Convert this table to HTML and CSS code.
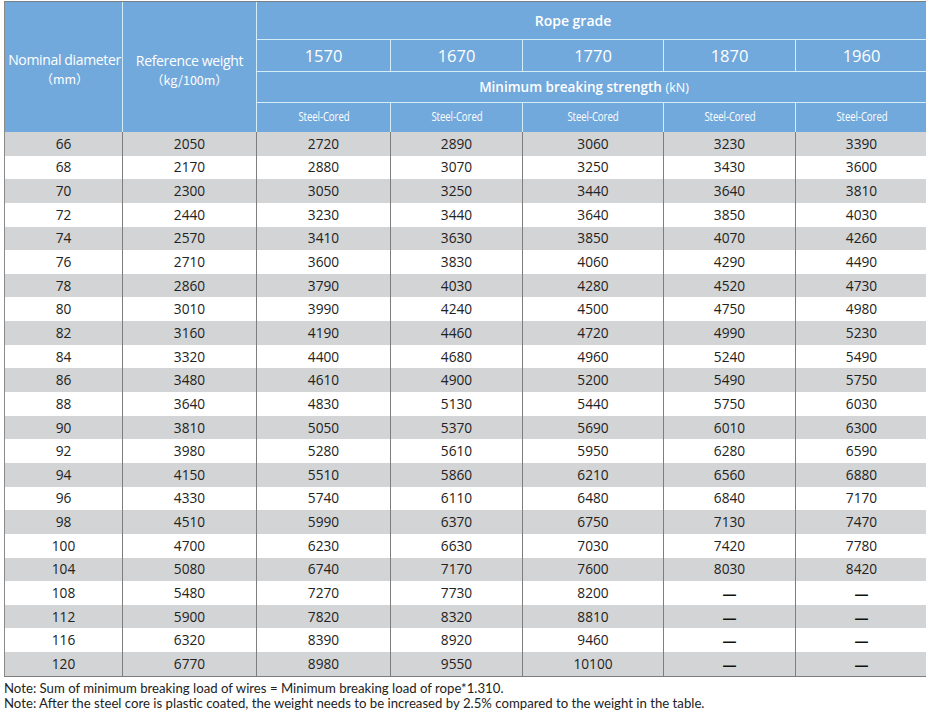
FILE: index.html
```html
<!DOCTYPE html>
<html lang="en">
<head>
<meta charset="utf-8">
<title>Rope grade table</title>
<link rel="stylesheet" href="styles.css">
</head>
<body>
<div class="page">
<table class="spec">
  <colgroup>
    <col class="c-dia"><col class="c-wt"><col class="c-g1"><col class="c-g2"><col class="c-g3"><col class="c-g4"><col class="c-g5">
  </colgroup>
  <thead>
    <tr class="h1">
      <th rowspan="4" class="side side-a">Nominal diameter<br><span class="unit">（mm）</span></th>
      <th rowspan="4" class="side side-b">Reference weight<br><span class="unit">（kg/100m）</span></th>
      <th colspan="5" class="title">Rope grade</th>
    </tr>
    <tr class="h2">
      <th class="grade">1570</th><th class="grade">1670</th><th class="grade">1770</th><th class="grade">1870</th><th class="grade last">1960</th>
    </tr>
    <tr class="h3">
      <th colspan="5" class="title sub">Minimum breaking strength <span class="kn">(kN)</span></th>
    </tr>
    <tr class="h4">
      <th class="core"><span class="narrow">Steel-Cored</span></th><th class="core"><span class="narrow">Steel-Cored</span></th><th class="core"><span class="narrow">Steel-Cored</span></th><th class="core"><span class="narrow">Steel-Cored</span></th><th class="core last"><span class="narrow">Steel-Cored</span></th>
    </tr>
  </thead>
  <tbody>
    <tr><td>66</td><td>2050</td><td>2720</td><td>2890</td><td>3060</td><td>3230</td><td>3390</td></tr>
    <tr><td>68</td><td>2170</td><td>2880</td><td>3070</td><td>3250</td><td>3430</td><td>3600</td></tr>
    <tr><td>70</td><td>2300</td><td>3050</td><td>3250</td><td>3440</td><td>3640</td><td>3810</td></tr>
    <tr><td>72</td><td>2440</td><td>3230</td><td>3440</td><td>3640</td><td>3850</td><td>4030</td></tr>
    <tr><td>74</td><td>2570</td><td>3410</td><td>3630</td><td>3850</td><td>4070</td><td>4260</td></tr>
    <tr><td>76</td><td>2710</td><td>3600</td><td>3830</td><td>4060</td><td>4290</td><td>4490</td></tr>
    <tr><td>78</td><td>2860</td><td>3790</td><td>4030</td><td>4280</td><td>4520</td><td>4730</td></tr>
    <tr><td>80</td><td>3010</td><td>3990</td><td>4240</td><td>4500</td><td>4750</td><td>4980</td></tr>
    <tr><td>82</td><td>3160</td><td>4190</td><td>4460</td><td>4720</td><td>4990</td><td>5230</td></tr>
    <tr><td>84</td><td>3320</td><td>4400</td><td>4680</td><td>4960</td><td>5240</td><td>5490</td></tr>
    <tr><td>86</td><td>3480</td><td>4610</td><td>4900</td><td>5200</td><td>5490</td><td>5750</td></tr>
    <tr><td>88</td><td>3640</td><td>4830</td><td>5130</td><td>5440</td><td>5750</td><td>6030</td></tr>
    <tr><td>90</td><td>3810</td><td>5050</td><td>5370</td><td>5690</td><td>6010</td><td>6300</td></tr>
    <tr><td>92</td><td>3980</td><td>5280</td><td>5610</td><td>5950</td><td>6280</td><td>6590</td></tr>
    <tr><td>94</td><td>4150</td><td>5510</td><td>5860</td><td>6210</td><td>6560</td><td>6880</td></tr>
    <tr><td>96</td><td>4330</td><td>5740</td><td>6110</td><td>6480</td><td>6840</td><td>7170</td></tr>
    <tr><td>98</td><td>4510</td><td>5990</td><td>6370</td><td>6750</td><td>7130</td><td>7470</td></tr>
    <tr><td>100</td><td>4700</td><td>6230</td><td>6630</td><td>7030</td><td>7420</td><td>7780</td></tr>
    <tr><td>104</td><td>5080</td><td>6740</td><td>7170</td><td>7600</td><td>8030</td><td>8420</td></tr>
    <tr><td>108</td><td>5480</td><td>7270</td><td>7730</td><td>8200</td><td class="na">—</td><td class="na">—</td></tr>
    <tr><td>112</td><td>5900</td><td>7820</td><td>8320</td><td>8810</td><td class="na">—</td><td class="na">—</td></tr>
    <tr><td>116</td><td>6320</td><td>8390</td><td>8920</td><td>9460</td><td class="na">—</td><td class="na">—</td></tr>
    <tr><td>120</td><td>6770</td><td>8980</td><td>9550</td><td>10100</td><td class="na">—</td><td class="na">—</td></tr>
  </tbody>
</table>
<div class="notes">
  <p>Note: Sum of minimum breaking load of wires = Minimum breaking load of rope*1.310.</p>
  <p>Note: After the steel core is plastic coated, the weight needs to be increased by 2.5% compared to the weight in the table.</p>
</div>
</div>
</body>
</html>
```
FILE: styles.css
```css
html, body {
  margin: 0;
  padding: 0;
  background: #ffffff;
}

.page {
  padding: 1px 0 0 4px;
  font-family: "Open Sans", "Noto Sans", "Noto Sans CJK SC", sans-serif;
  color: #222222;
}

.spec {
  border-collapse: separate;
  border-spacing: 0;
  table-layout: fixed;
  width: 922px;
  border-top: 1px solid #7b7f84;
  border-left: 1px solid #8a8a8a;
  border-bottom: 1px solid #7d7d7d;
}

.c-dia { width: 118px; }
.c-wt { width: 134px; }
.c-g1 { width: 134px; }
.c-g2 { width: 132px; }
.c-g3 { width: 141px; }
.c-g4 { width: 132px; }
.c-g5 { width: 131px; }

.spec th {
  background: #72a9dc;
  color: #ffffff;
  font-weight: 400;
  padding: 0;
  text-align: center;
  vertical-align: middle;
  border-right: 1px solid #d2ecf8;
  border-bottom: 1px solid #d2ecf8;
  white-space: nowrap;
}

.spec th.last { border-right: none; }
.spec .h1 .title { border-right: none; }
.spec .h3 .title { border-right: none; }

.spec .side {
  font-size: 14px;
  line-height: 19px;
  letter-spacing: -0.35px;
  border-bottom: none;
  padding-top: 3px;
}

.spec .side-a { padding-left: 2px; }
.spec .side-b { padding-top: 6px; }

.spec .unit {
  font-size: 12.5px;
  letter-spacing: 0;
  font-family: "Noto Sans CJK SC", "Open Sans", sans-serif;
}

.spec .h1 th.title {
  height: 37px;
  font-size: 14px;
  font-weight: 600;
  padding-right: 38px;
}

.spec .h2 th {
  height: 31px;
  font-size: 16.5px;
}

.spec .h3 th {
  height: 30px;
  font-size: 13.5px;
  font-weight: 600;
  padding-right: 16px;
}

.spec .kn {
  font-weight: 400;
  font-size: 12.5px;
}

.spec .h4 th {
  height: 27px;
  padding-bottom: 2px;
  border-bottom: none;
  font-size: 12px;
}

.spec .narrow {
  display: inline-block;
  transform: scaleX(0.8);
  letter-spacing: -0.1px;
}

.spec td {
  height: 23.65px;
  padding: 0;
  text-align: center;
  vertical-align: middle;
  font-size: 13.7px;
  line-height: 16px;
  border-right: 1px solid #7d7d7d;
  background: #ffffff;
}

.spec td:last-child { border-right: none; }

.spec tbody tr:nth-child(odd) td { background: #d3d4d5; }

.spec td.na {
  font-family: "Noto Sans CJK SC", sans-serif;
  font-weight: 700;
  font-size: 16px;
  color: #111111;
}

.notes {
  padding-top: 4px;
  font-family: "Lato", "Open Sans", sans-serif;
  font-size: 13.2px;
  line-height: 15px;
  color: #222222;
}

.notes p {
  margin: 0;
}
```
